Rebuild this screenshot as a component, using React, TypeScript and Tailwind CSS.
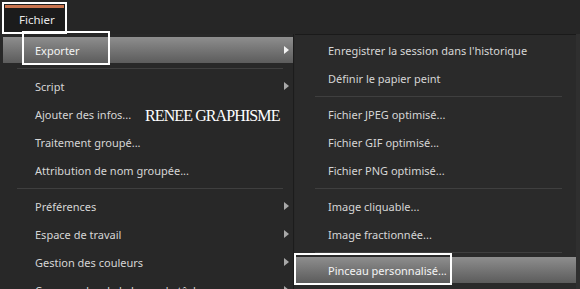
const font = { fontFamily: '"Noto Sans", "Open Sans", sans-serif' }

type Item = { label: string; arrow?: boolean; sep?: false } | { sep: true }

const leftItems: Item[] = [
  { label: 'Exporter', arrow: true },
  { sep: true },
  { label: 'Script', arrow: true },
  { label: 'Ajouter des infos...' },
  { label: 'Traitement groupé...' },
  { label: 'Attribution de nom groupée...' },
  { sep: true },
  { label: 'Préférences', arrow: true },
  { label: 'Espace de travail', arrow: true },
  { label: 'Gestion des couleurs', arrow: true },
  { label: 'Commandes de la barre de tâches...', arrow: true },
]

const rightItems: Item[] = [
  { label: "Enregistrer la session dans l'historique" },
  { label: 'Définir le papier peint' },
  { sep: true },
  { label: 'Fichier JPEG optimisé...' },
  { label: 'Fichier GIF optimisé...' },
  { label: 'Fichier PNG optimisé...' },
  { sep: true },
  { label: 'Image cliquable...' },
  { label: 'Image fractionnée...' },
  { sep: true },
  { label: 'Pinceau personnalisé...' },
]

function Arrow({ active }: { active?: boolean }) {
  return (
    <svg width="5" height="8" viewBox="0 0 5 8" className="shrink-0">
      <path d="M0 0 L5 4 L0 8 Z" fill={active ? '#f2f2f2' : '#a8a8a8'} />
    </svg>
  )
}

function Separator({ inset }: { inset: string }) {
  return (
    <div className={`h-2 flex items-center ${inset}`}>
      <div className="h-px w-full bg-[#3f3f3f]" />
    </div>
  )
}

function Row({
  label,
  arrow,
  active,
  padLeft,
  boxWidth,
}: {
  label: string
  arrow?: boolean
  active?: boolean
  padLeft: string
  boxWidth?: string
}) {
  return (
    <div className="h-7 py-px relative">
      <div
        className={`h-full flex items-center justify-between pr-[4px] ${padLeft} ${
          active ? 'bg-gradient-to-b from-[#8e8e8e] to-[#5c5c5c]' : ''
        }`}
      >
        <span className={`text-[11px] leading-none ${active ? 'text-[#f4f4f4]' : 'text-[#d6d6d6]'}`}>
          {label}
        </span>
        {arrow && <Arrow active={active} />}
      </div>
      {boxWidth && (
        <div className={`absolute border-2 border-white pointer-events-none ${boxWidth}`} />
      )}
    </div>
  )
}

export default function App() {
  return (
    <div className="w-[580px] h-[289px] overflow-hidden bg-[#282828] flex flex-col" style={font}>
      {/* menu bar */}
      <div className="h-[34px] bg-[#262626] flex items-start pt-[2px] pl-[2px] shrink-0">
        <div className="w-[65px] h-[32px] border-2 border-white bg-[#1b1b1b] flex flex-col">
          <div className="h-[3px] mx-px mt-px bg-[#c97550]" />
          <div className="flex-1 flex items-center pl-[15px] text-[11.5px] text-[#e8e8e8]">Fichier</div>
        </div>
      </div>

      <div className="flex flex-1 min-h-0">
        {/* main menu */}
        <div className="w-[294px] pl-[3px] pt-[2px] border-r border-[#1c1c1c] shrink-0">
          {leftItems.map((it, i) =>
            it.sep ? (
              <Separator key={i} inset="ml-[14px] mr-[10px]" />
            ) : (
              <Row
                key={i}
                label={it.label}
                arrow={it.arrow}
                active={i === 0}
                padLeft="pl-[32px]"
                boxWidth={i === 0 ? 'left-[19px] top-[-5px] w-[88px] h-[34px]' : undefined}
              />
            )
          )}
        </div>

        {/* export submenu */}
        <div className="w-[281px] border-t border-[#1a1a1a] pt-px bg-[#2a2a2a] shrink-0 ml-px">
          {rightItems.map((it, i) =>
            it.sep ? (
              <Separator key={i} inset="ml-[20px] mr-[14px]" />
            ) : (
              <Row
                key={i}
                label={it.label}
                arrow={it.arrow}
                active={i === rightItems.length - 1}
                padLeft="pl-[33px]"
                boxWidth={
                  i === rightItems.length - 1 ? 'left-[-1px] top-[-3px] w-[158px] h-[32px]' : undefined
                }
              />
            )
          )}
        </div>
        <div className="flex-1 bg-[#2f2f2f]" />
      </div>

      {/* watermark */}
      <div
        className="absolute left-[145px] top-[104px] text-[16px] text-white tracking-[-0.9px]"
        style={{ fontFamily: '"Liberation Serif", "DejaVu Serif", serif' }}
      >
        RENEE GRAPHISME
      </div>
    </div>
  )
}
